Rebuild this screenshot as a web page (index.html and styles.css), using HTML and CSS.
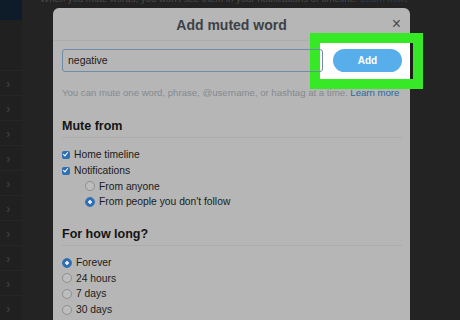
FILE: index.html
```html
<!DOCTYPE html>
<html lang="en">

<head>
    <meta charset="UTF-8">
    <title>Add muted word</title>
    <link rel="stylesheet" href="styles.css">
</head>

<body>
    <div class="page">
        <div class="sidebar">
            <div class="logo-block"></div>
            <div class="nav-rows">
                <div class="nav-row"><span class="chev">&#8250;</span></div>
                <div class="nav-row"><span class="chev">&#8250;</span></div>
                <div class="nav-row"><span class="chev">&#8250;</span></div>
                <div class="nav-row"><span class="chev">&#8250;</span></div>
                <div class="nav-row"><span class="chev">&#8250;</span></div>
                <div class="nav-row"><span class="chev">&#8250;</span></div>
                <div class="nav-row"><span class="chev">&#8250;</span></div>
                <div class="nav-row"><span class="chev">&#8250;</span></div>
                <div class="nav-row"><span class="chev">&#8250;</span></div>
                <div class="nav-row"><span class="chev">&#8250;</span></div>
            </div>
        </div>
        <div class="main">
            <p class="intro">When you mute words, you won't see them in your notifications or timeline. <span class="dim-link">Learn more</span></p>
        </div>
    </div>

    <!-- highlight frame drawn over the dimmed modal -->
    <div class="highlight">
        <div class="highlight-inner"></div>
    </div>

    <div class="modal">
        <div class="modal-header">
            <h2>Add muted word</h2>
            <span class="close">&#215;</span>
        </div>

        <div class="modal-body">
            <div class="word-row">
                <div class="word-input">negative</div>
                <button class="add-btn">Add</button>
            </div>
            <p class="hint">You can mute one word, phrase, @username, or hashtag at a time. <a href="#">Learn more</a></p>

            <h3 class="section-title">Mute from</h3>
            <div class="options">
                <label class="opt"><span class="check"></span>Home timeline</label>
                <label class="opt"><span class="check"></span>Notifications</label>
                <div class="sub-options">
                    <label class="opt"><span class="radio"></span>From anyone</label>
                    <label class="opt"><span class="radio on"></span>From people you don't follow</label>
                </div>
            </div>

            <h3 class="section-title second">For how long?</h3>
            <div class="options">
                <label class="opt"><span class="radio on"></span>Forever</label>
                <label class="opt"><span class="radio"></span>24 hours</label>
                <label class="opt"><span class="radio"></span>7 days</label>
                <label class="opt"><span class="radio"></span>30 days</label>
            </div>
        </div>
    </div>
</body>

</html>
```

FILE: styles.css
```css
body {
    margin: 0;
    width: 460px;
    height: 320px;
    overflow: hidden;
    background-color: #232323;
    font-family: "Liberation Sans", Arial, sans-serif;
    position: relative;
}

.page {
    display: flex;
    height: 320px;
}

.sidebar {
    width: 22px;
    background-color: #202020;
    display: flex;
    flex-direction: column;
}

.logo-block {
    height: 20px;
    background-color: #0e1b29;
}

.nav-rows {
    margin-top: 50px;
}

.nav-row {
    height: 24px;
    border-top: 1px solid #262626;
    display: flex;
    align-items: center;
    padding-left: 6px;
}

.chev {
    color: #3a3a3a;
    font-size: 13px;
    font-weight: bold;
}

.main {
    flex: 1;
}

.intro {
    margin: -7px 0 0 18px;
    font-size: 9.6px;
    color: #4a4a4a;
    white-space: nowrap;
}

.dim-link {
    color: #2c3d50;
}

/* modal */
.modal {
    position: absolute;
    left: 53px;
    top: 8px;
    width: 357px;
    height: 312px;
    background-color: #b6b6b6;
    border-radius: 6px 6px 0 0;
}

.modal-header {
    height: 32px;
    border-bottom: 1px solid #adadad;
    display: flex;
    align-items: center;
    justify-content: center;
    position: relative;
}

.modal-header h2 {
    margin: 2px 0 0;
    font-size: 14px;
    font-weight: bold;
    color: #3c4147;
}

.close {
    position: absolute;
    right: 9px;
    top: 7px;
    font-size: 16px;
    color: #464a4e;
}

.modal-body {
    padding: 8px 8px 0 9px;
}

.word-row {
    display: flex;
    align-items: center;
    gap: 10px;
}

.word-input {
    position: relative;
    z-index: 2;
    width: 261px;
    height: 23px;
    box-sizing: border-box;
    border: 1px solid #6f8ca6;
    border-radius: 3px;
    font-size: 10.5px;
    color: #1c1c1c;
    padding-left: 5px;
    line-height: 21px;
}

.add-btn {
    position: relative;
    z-index: 2;
    width: 69px;
    height: 23px;
    border: none;
    border-radius: 12px;
    background-color: #58aeea;
    color: white;
    font-family: "Liberation Sans", Arial, sans-serif;
    font-weight: bold;
    font-size: 10px;
}

.hint {
    margin: 15px 0 0;
    font-size: 9.6px;
    color: #838a90;
    white-space: nowrap;
}

.hint a {
    color: #2a69a1;
    text-decoration: none;
}

.section-title {
    margin: 21px 0 0;
    padding-bottom: 4px;
    border-bottom: 1px solid #aaaeb2;
    font-size: 12.5px;
    color: #141414;
}

.section-title.second {
    margin-top: 17px;
}

.options {
    padding-top: 9px;
}

.opt {
    display: flex;
    align-items: center;
    height: 15.7px;
    font-size: 10.3px;
    color: #1a1a1a;
}

.sub-options {
    padding-left: 23px;
}

.check {
    width: 8px;
    height: 8px;
    margin-right: 4px;
    border-radius: 2px;
    background-color: #2f6fb4;
    position: relative;
}

.check::after {
    content: "";
    position: absolute;
    left: 2px;
    top: 0.5px;
    width: 2px;
    height: 4px;
    border: solid white;
    border-width: 0 1.3px 1.3px 0;
    transform: rotate(40deg);
}

.radio {
    width: 8px;
    height: 8px;
    margin-right: 4px;
    border-radius: 50%;
    border: 1px solid #8e8e8e;
    background-color: #bdbdbd;
}

.radio.on {
    border-color: #2f6fb4;
    background: radial-gradient(circle, #e6eef6 0 1.5px, #2f6fb4 2px);
}

/* green callout frame */
.highlight {
    position: absolute;
    left: 310px;
    top: 33px;
    width: 113px;
    height: 56px;
    box-sizing: border-box;
    padding: 10px;
    background-color: #36e826;
    z-index: 1;
}

.highlight-inner {
    height: 100%;
    background-color: #ffffff;
    border-right: 3px solid #1e1e1e;
}
```
